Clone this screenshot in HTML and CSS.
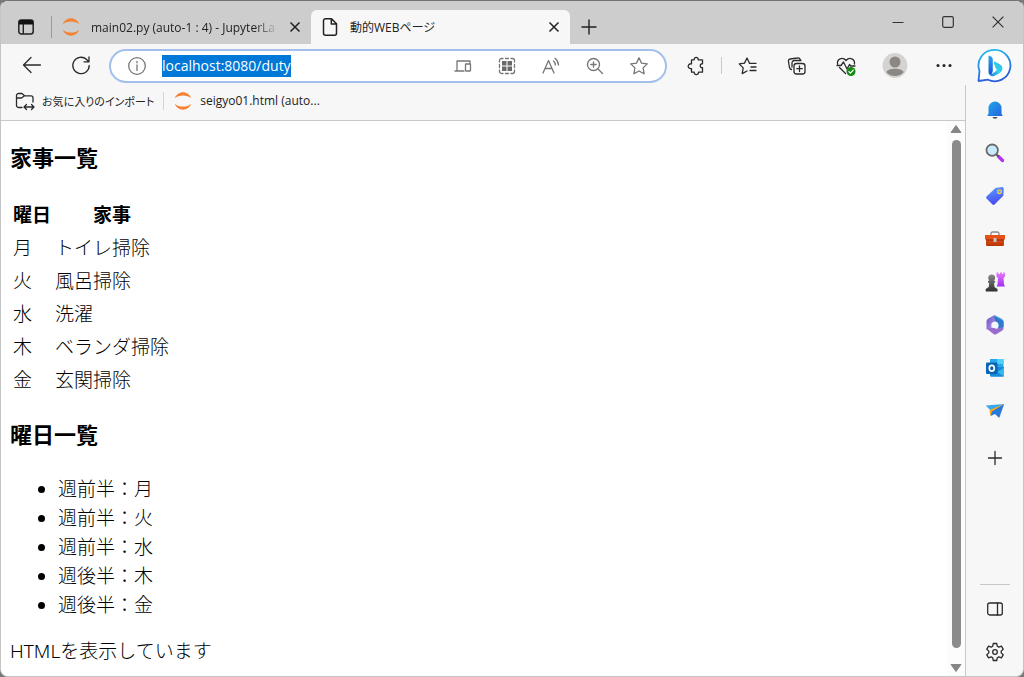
FILE: index.html
```html
<!DOCTYPE html>
<html lang="ja">
<head>
<meta charset="utf-8">
<meta name="viewport" content="width=device-width, initial-scale=1">
<title>動的WEBページ</title>
<link rel="stylesheet" href="styles.css">
</head>
<body>
<svg class="defs" aria-hidden="true">
  <defs>
    <linearGradient id="blue" x1="0" y1="0" x2="1" y2="1"><stop offset="0" stop-color="#1fa7e8"/><stop offset="1" stop-color="#2563e0"/></linearGradient>
    <linearGradient id="ring" x1="0" y1="0" x2="0.3" y2="1"><stop offset="0" stop-color="#25c3ee"/><stop offset="1" stop-color="#2a5bdc"/></linearGradient>
    <linearGradient id="stem" x1="0" y1="0" x2="0" y2="1"><stop offset="0" stop-color="#2aa8f0"/><stop offset="1" stop-color="#1a50d8"/></linearGradient>
    <linearGradient id="bowl" x1="1" y1="0" x2="0" y2="1"><stop offset="0" stop-color="#2db4ee"/><stop offset="0.5" stop-color="#35d3ec"/><stop offset="1" stop-color="#1c6fe8"/></linearGradient>
    <linearGradient id="tag" x1="0" y1="0" x2="0.3" y2="1"><stop offset="0" stop-color="#5aa4fb"/><stop offset="1" stop-color="#4a4af5"/></linearGradient>
    <linearGradient id="box" x1="0" y1="0" x2="0" y2="1"><stop offset="0" stop-color="#f0642a"/><stop offset="1" stop-color="#b93305"/></linearGradient>
    <linearGradient id="rook" x1="0" y1="0" x2="0" y2="1"><stop offset="0" stop-color="#e57bfa"/><stop offset="1" stop-color="#a12df5"/></linearGradient>
    <linearGradient id="pawn" x1="0" y1="0" x2="0" y2="1"><stop offset="0" stop-color="#8a8a8a"/><stop offset="1" stop-color="#303030"/></linearGradient>
    <linearGradient id="violet" x1="0" y1="0" x2="1" y2="1"><stop offset="0" stop-color="#5a4fc4"/><stop offset="1" stop-color="#c79be8"/></linearGradient>
    <symbol id="jupyter" viewBox="0 0 20 20"><path d="M1.800 7.200C3.200 3.500 6.300 1.300 10 1.300s6.800 2.200 8.200 5.900C16.200 5.200 13.200 4.400 10 4.400S3.800 5.200 1.800 7.200zM1.800 12.800C3.200 16.500 6.300 18.700 10 18.700s6.800-2.200 8.200-5.900c-2 2-5 2.800-8.200 2.800s-6.200-.8-8.200-2.800z" fill="#f58233"/></symbol>
    <symbol id="close" viewBox="0 0 12 12"><path d="M1.500 1.500l9 9m0-9l-9 9" fill="none" stroke="#222" stroke-width="1.500"/></symbol>
  </defs>
</svg>
<div class="window">
  <header class="tabstrip">
    <button class="tab-menu" aria-label="タブ操作メニュー"><svg width="18" height="18" viewBox="0 0 18 18"><rect x="1.800" y="2" width="14.400" height="14" rx="2.500" fill="none" stroke="#222" stroke-width="1.500"/><path d="M2 6.500V4.500A2.500 2.500 0 0 1 4.500 2h9A2.500 2.500 0 0 1 16 4.500v2z" fill="#111"/><path d="M6.300 6v10" stroke="#222" stroke-width="1.400"/></svg></button>
    <span class="tab-rule"></span>
    <div class="tab">
      <svg width="20" height="20"><use href="#jupyter"/></svg>
      <span class="tab-title faded">main02.py (auto-1 : 4) - JupyterLa</span>
      <button class="tab-close" aria-label="タブを閉じる"><svg width="12" height="12"><use href="#close"/></svg></button>
    </div>
    <div class="tab active">
      <svg width="20" height="20" viewBox="0 0 20 20"><path d="M5.500 1.800h6l5 5v9.400a2 2 0 0 1-2 2h-9a2 2 0 0 1-2-2V3.800a2 2 0 0 1 2-2zM11.300 2v5h5" fill="none" stroke="#222" stroke-width="1.500" stroke-linejoin="round"/></svg>
      <span class="tab-title">動的WEBページ</span>
      <button class="tab-close" aria-label="タブを閉じる"><svg width="12" height="12"><use href="#close"/></svg></button>
    </div>
    <button class="new-tab" aria-label="新しいタブ"><svg width="16" height="16" viewBox="0 0 16 16"><path d="M8 .5v15M.5 8h15" stroke="#222" stroke-width="1.400"/></svg></button>
    <div class="caption">
      <button aria-label="最小化"><svg width="12" height="12" viewBox="0 0 12 12"><path d="M.5 6.500h11" stroke="#333"/></svg></button>
      <button aria-label="最大化"><svg width="12" height="12" viewBox="0 0 12 12"><rect x=".7" y=".7" width="10.600" height="10.600" rx="1.500" fill="none" stroke="#333" stroke-width="1.200"/></svg></button>
      <button aria-label="閉じる"><svg width="12" height="12" viewBox="0 0 12 12"><path d="M.6.6l10.800 10.800m0-10.800L.6 11.400" stroke="#333" stroke-width="1.200"/></svg></button>
    </div>
  </header>

  <div class="body">
    <div class="main">
      <nav class="toolbar" aria-label="ツール バー">
        <button class="tool" aria-label="戻る"><svg width="20" height="20" viewBox="0 0 20 20" class="line"><path d="M18.500 9H1.800M9 1.500L1.500 9 9 16.500"/></svg></button>
        <button class="tool" aria-label="更新"><svg width="20" height="20" viewBox="0 0 20 20" class="line"><path d="M18.200 9.500A8.200 8.200 0 1 1 15.600 3.500l1.900 2M18 .8v5h-5"/></svg></button>
        <div class="address">
          <button class="mini" aria-label="サイト情報"><svg width="20" height="20" viewBox="0 0 20 20" class="line grey"><circle cx="10" cy="10" r="8.300"/><path d="M10 9v5.500M10 5.300v1.500"/></svg></button>
          <input id="url" class="url" type="text" aria-label="アドレス" value="localhost:8080/duty" spellcheck="false">
          <div class="address-tools">
            <button class="mini" aria-label="デバイス"><svg width="20" height="20" viewBox="0 0 20 20" class="line grey"><path d="M11 15H2M4 15V5h13v2.500"/><rect x="12.500" y="8" width="5" height="7" rx=".5"/></svg></button>
            <button class="mini" aria-label="QR コード"><svg width="20" height="20" viewBox="0 0 20 20" class="line grey"><path d="M2.500 6V4.500a2 2 0 0 1 2-2H6M8.500 2.500h3M14 2.500h1.500a2 2 0 0 1 2 2V6M17.500 8.500v3M17.500 14v1.500a2 2 0 0 1-2 2H14M11.500 17.500h-3M6 17.500H4.500a2 2 0 0 1-2-2V14M2.500 11.500v-3"/><path d="M5 5h4.500v4.500H5zM10.500 5H15v4.500h-4.500zM5 10.500h4.500V15H5zM10.500 10.500H15V15h-4.500z" fill="#6a6a6a" stroke="none"/></svg></button>
            <button class="mini" aria-label="音声で読み上げる"><svg width="20" height="20" viewBox="0 0 20 20" class="line grey"><path d="M2 17L7.500 4.500 13 17M4 12.500h7M12.500 5a5 5 0 0 1 1.800 4M14 2.300a9 9 0 0 1 3.500 6.700"/></svg></button>
            <button class="mini" aria-label="拡大"><svg width="20" height="20" viewBox="0 0 20 20" class="line grey"><circle cx="8.500" cy="8.500" r="6"/><path d="M13 13l4.500 4.500M8.500 5.800v5.400M5.800 8.500h5.400"/></svg></button>
            <button class="mini" aria-label="お気に入りに追加"><svg width="20" height="20" viewBox="0 0 20 20" class="line grey"><path d="M10 1.800l2.500 5.300 5.800.8-4.200 4 1 5.900-5.100-2.800-5.100 2.800 1-5.900-4.200-4 5.800-.8z"/></svg></button>
          </div>
        </div>
        <div class="extensions">
          <button class="tool" aria-label="拡張機能"><svg width="20" height="20" viewBox="0 0 20 20" class="line"><path d="M5.500 3.800h2.700c-.3-3.200 4.300-3.200 4 0h4.300v4c-3-.4-3 4.300 0 3.900v4.500h-4c.3 3.200-4.700 3.200-4.300 0H5.500v-3.500c-4.400.6-4.400-5.500 0-4.900z"/></svg></button>
          <span class="tool-rule"></span>
          <button class="tool" aria-label="お気に入り"><svg width="20" height="20" viewBox="0 0 20 20" class="line"><path d="M11.500 7.200L9 2 6.500 7.100l-5.300.8 4 4-1 5.700L9 15M11.500 7.400H18M13 11h5M12 14.500h6"/></svg></button>
        </div>
        <button class="tool" aria-label="コレクション"><svg width="20" height="20" viewBox="0 0 20 20" class="line"><rect x="7" y="7.500" width="11" height="10.500" rx="2.500"/><path d="M12.500 10v5.500M9.800 12.700h5.500M4.500 13.500c-1.300-.3-1.800-1-2-2L1.500 5.700C1.200 4.200 1.800 3.200 3.200 3L10.500 2c1.500-.3 2.500.3 3 2.500M5 11V7a2.500 2.500 0 0 1 2.500-2.500H14"/></svg></button>
        <button class="tool" aria-label="ブラウザーのエッセンシャル"><svg width="20" height="20" viewBox="0 0 20 20" class="line"><path d="M1.600 8C.6 3 6.500.5 10 4.500 13.500.5 19.400 3 18.400 8M3.500 11.500l6 6M1 9.500h4L7.500 6l3.500 7 2.500-4.500 1.200 1.500H19"/><circle cx="15" cy="15.500" r="4.500" fill="#138a13" stroke="none"/><path d="M12.900 15.600l1.500 1.500 2.800-3" stroke="#fff"/></svg></button>
        <button class="tool" aria-label="プロファイル"><svg width="26" height="26" viewBox="0 0 26 26"><circle cx="13" cy="12.500" r="12.400" fill="#d5d3d0"/><circle cx="13" cy="9" r="5.500" fill="#8a8785"/><path d="M4.500 19.500c0-5 17-5 17 0a12 12 0 0 1-17 0z" fill="#8a8785"/></svg></button>
        <button class="tool" aria-label="設定など"><svg width="20" height="20" viewBox="0 0 20 20"><g fill="#222"><circle cx="4" cy="9.500" r="1.500"/><circle cx="10" cy="9.500" r="1.500"/><circle cx="16" cy="9.500" r="1.500"/></g></svg></button>
      </nav>

      <nav class="favorites" aria-label="お気に入りバー">
        <a href="#" class="favorite"><svg width="20" height="20" viewBox="0 0 20 20" class="line"><path d="M7 16.500H3.500A2 2 0 0 1 1.500 14.500v-10a2 2 0 0 1 2-2H7l2.500 2.300H16a2 2 0 0 1 2 2V11M1.500 7H6.500L9.500 4.800M9.500 16H19M11.500 13.500L9 16l2.500 2.500M16.500 13.500L19 16l-2.500 2.500"/></svg><span class="compact">お気に入りのインポート</span></a>
        <span class="favorite-rule"></span>
        <a href="#" class="favorite"><svg width="20" height="20"><use href="#jupyter"/></svg><span>seigyo01.html (auto...</span></a>
      </nav>

      <div class="viewport">
        <main class="page">
          <h3>家事一覧</h3>
          <table>
            <thead><tr><th>曜日</th><th>家事</th></tr></thead>
            <tbody>
              <tr><td>月</td><td>トイレ掃除</td></tr>
              <tr><td>火</td><td>風呂掃除</td></tr>
              <tr><td>水</td><td>洗濯</td></tr>
              <tr><td>木</td><td>ベランダ掃除</td></tr>
              <tr><td>金</td><td>玄関掃除</td></tr>
            </tbody>
          </table>
          <h3>曜日一覧</h3>
          <ul>
            <li>週前半：月</li>
            <li>週前半：火</li>
            <li>週前半：水</li>
            <li>週後半：木</li>
            <li>週後半：金</li>
          </ul>
          <p>HTMLを表示しています</p>
        </main>
        <div class="scrollbar">
          <svg width="12" height="8" viewBox="0 0 12 8"><path d="M6 .5L11 7.500H1z" fill="#868686" stroke="#868686" stroke-linejoin="round"/></svg>
          <span class="thumb"></span>
          <svg width="12" height="8" viewBox="0 0 12 8"><path d="M6 7.500L1 .5h10z" fill="#868686" stroke="#868686" stroke-linejoin="round"/></svg>
        </div>
      </div>
    </div>

    <aside class="sidebar">
      <button class="bing" aria-label="検出"><svg width="36" height="36" viewBox="0 0 36 36"><path d="M18.500 1.800A15.700 15.700 0 1 1 12 31.700L2.500 33 3.500 23A15.700 15.700 0 0 1 18.500 1.800z" fill="#fff" stroke="url(#ring)" stroke-width="1.800" stroke-linejoin="round"/><path d="M13 7.500q3.800 1 3.800 4v11.500L15.500 27Q12.500 26.500 12.500 24V8q0-.5.5-.5z" fill="url(#stem)"/><path d="M18.500 13.500l5 2.600q3 1.600 3 4.500 0 3-3 4.700l-5 2.500q-3.500 1.500-5.500-1.500 2.500.5 6-2.500l2-2q-1.200-.8-1.700-2.300l-1.500-4.500q-.3-1.500.7-1.500z" fill="url(#bowl)"/></svg></button>
      <div class="apps">
        <button aria-label="通知"><svg width="20" height="20" viewBox="0 0 20 20"><path d="M3.500 13.500V8a6.500 6.500 0 0 1 13 0v5.500L17.700 16H2.300z" fill="url(#blue)"/><path d="M7.500 17h5a2.500 1.800 0 0 1-5 0z" fill="#555"/></svg></button>
        <button aria-label="検索"><svg width="20" height="20" viewBox="0 0 20 20"><path d="M13.500 13.500l4 4" stroke="#b42df5" stroke-width="3.200" stroke-linecap="round"/><path d="M11 11l2.500 2.500" stroke="#555" stroke-width="2"/><circle cx="7.200" cy="7.200" r="5.700" fill="#c9eafc" stroke="#6b6b6b" stroke-width="1.800"/></svg></button>
        <button aria-label="ショッピング"><svg width="20" height="20" viewBox="0 0 20 20"><path d="M10.500 2L17 1q1.800 0 1.800 1.800l-.5 7L9.500 18.500q-1 .8-2 0L1.500 12.500q-.8-1 0-2z" fill="url(#tag)"/><circle cx="14.500" cy="5.800" r="1.900" fill="#7798ef" stroke="#f2cf45" stroke-width="1.200"/></svg></button>
        <button aria-label="ツール"><svg width="20" height="20" viewBox="0 0 20 20"><path d="M6 6V4.500a1.500 1.500 0 0 1 1.500-1.500h5A1.500 1.500 0 0 1 14 4.500V6" fill="none" stroke="#888" stroke-width="1.300"/><rect x="1" y="6" width="18" height="11" rx="1.200" fill="url(#box)"/><path d="M0 6h20v4.500H0z" fill="#e65118"/><path d="M1 11h18" stroke="#8f2b08"/><rect x="8.500" y="9" width="3" height="4" fill="#c3c3c3"/></svg></button>
        <button aria-label="ゲーム"><svg width="20" height="20" viewBox="0 0 20 20"><path d="M11.500.5h2V2h1.500V.5h2V2h1.300V.5H20v4L18.500 6l.5 6.500 1 2h-8.500l1-2L13 6l-1.500-1.500z" fill="url(#rook)"/><path d="M3.200 6a3.500 3.500 0 1 1 7 0q0 1.800-1.500 2.800h1.500v2H9l.5 4.200 3 2v2.500H.7V17l3-2 .5-4.200H3v-2h1.500Q3.200 7.800 3.200 6z" fill="url(#pawn)"/></svg></button>
        <button aria-label="Microsoft 365"><svg width="20" height="20" viewBox="0 0 20 20"><path d="M9.500 0L17 4q1.500 1 1.500 2.500v5L13 9.500 10 6 7 7.500z" fill="#3ea3dc"/><path d="M9.500 0L3 3.800Q1.500 4.800 1.500 6.500v8L6.500 13V8.500L10 6.500z" fill="url(#violet)"/><path d="M1.500 13.500L8.500 19q1.500 1 3 0l5.500-3.300q1.500-1 1.500-2.500v-2L12 14l-3.500-1.500z" fill="#9a6bce"/><path d="M18.500 6v6L12 14l1.500-2V8L10 6l-1-5z" fill="#3278cd"/><circle cx="10" cy="10" r="3.300" fill="#f7f7f7"/></svg></button>
        <button aria-label="Outlook"><svg width="20" height="20" viewBox="0 0 20 20"><path d="M5 1h13.500v9H5z" fill="#28a8ea"/><path d="M12 1h6.500v5H12z" fill="#50d1f7"/><path d="M5 9h14v8.500q0 1.300-1.300 1.300H6.300Q5 18.800 5 17.500z" fill="#168bd8"/><path d="M19 10v8.500L12 14z" fill="#35b8f1"/><rect x="1" y="4.500" width="11.500" height="11.500" rx="1.200" fill="#0864b5"/><ellipse cx="6.800" cy="10.300" rx="2.500" ry="2.900" fill="none" stroke="#fff" stroke-width="1.700"/></svg></button>
        <button aria-label="Drop"><svg width="20" height="20" viewBox="0 0 20 20"><path d="M.8 4.500L19.200 3 6 10z" fill="#37a9ee"/><path d="M4.500 9L19.200 3 5.500 15z" fill="#f8a719"/><path d="M5.500 15L7 10.500 19.200 3l-5 14-4.200-4z" fill="#2979dc"/></svg></button>
        <button aria-label="カスタマイズ"><svg width="20" height="20" viewBox="0 0 20 20" class="line"><path d="M10 3.500v13M3.500 10h13"/></svg></button>
      </div>
      <div class="side-settings">
        <button aria-label="サイドバーの表示"><svg width="20" height="20" viewBox="0 0 20 20" class="line"><rect x="2.700" y="4" width="14.600" height="12" rx="2"/><path d="M12.500 4v12"/></svg></button>
        <button aria-label="設定"><svg width="20" height="20" viewBox="0 0 20 20" class="line"><path d="M8.300 1.500h3.400l.6 2.700 1.500.9 2.600-.9 1.800 3-2 1.900v1.800l2 1.900-1.800 3-2.600-.9-1.500.9-.6 2.700H8.300l-.6-2.700-1.500-.9-2.600.9-1.800-3 2-1.900V9.100l-2-1.900 1.800-3 2.600.9 1.500-.9z"/><circle cx="10" cy="10" r="2.300"/></svg></button>
      </div>
    </aside>
  </div>
</div>
<script>
  const url = document.getElementById("url");
  url.focus();
  url.select();
</script>
</body>
</html>
```
FILE: styles.css
```css
* { box-sizing: border-box; }

body {
  margin: 0;
  background: #77797b;
  color: #222;
  font-family: "Open Sans", "Noto Sans CJK JP", sans-serif;
  font-size: 12px;
}

button {
  display: flex;
  align-items: center;
  justify-content: center;
  padding: 0;
  border: 0;
  background: none;
}

svg { display: block; flex: none; }
.defs { position: absolute; width: 0; height: 0; }

.line {
  fill: none;
  stroke: #2b2b2b;
  stroke-width: 1.3;
  stroke-linecap: round;
  stroke-linejoin: round;
}
.line.grey { stroke: #767676; }

.window {
  display: flex;
  flex-direction: column;
  min-height: 100vh;
  overflow: hidden;
  border: 1px solid #c4c4c4;
  border-top-color: #747274;
  border-radius: 8px;
  background: #f7f7f7;
}

/* Tab strip */
.tabstrip {
  display: flex;
  align-items: stretch;
  height: 43px;
  padding-top: 9px;
  background: #cdcdcd;
}
.tab-menu { width: 50px; }
.tab-rule { width: 1px; height: 22px; margin-top: 6px; background: #999; }
.tab {
  display: flex;
  flex: 0 1 259px;
  align-items: center;
  gap: 10px;
  min-width: 0;
  padding: 0 9px;
}
.tab.active { border-radius: 6px 6px 0 0; background: #f7f7f7; }
.tab-title {
  flex: 1;
  min-width: 0;
  overflow: hidden;
  white-space: nowrap;
  font-feature-settings: "palt";
}
.faded {
  -webkit-mask-image: linear-gradient(to right, #000 88%, transparent);
  mask-image: linear-gradient(to right, #000 88%, transparent);
}
.tab-close { width: 14px; height: 20px; }
.new-tab { width: 38px; }
.caption { display: flex; height: 24px; margin-left: auto; }
.caption button { width: 50px; }

/* Area below the tab strip */
.body { display: flex; flex: 1; }
.main { display: flex; flex: 1; flex-direction: column; min-width: 0; }

.toolbar { display: flex; align-items: center; gap: 8px; height: 43px; padding: 0 1px 0 10px; }
.tool { flex: none; width: 41px; height: 34px; }
.address {
  display: flex;
  flex: 1;
  align-items: center;
  min-width: 0;
  height: 34px;
  padding: 0 14px;
  border: 2px solid #a3c0ec;
  border-radius: 17px;
  background: #fff;
}
.mini { flex: none; width: 24px; height: 24px; }
.url {
  flex: 1;
  min-width: 0;
  margin-left: 13px;
  padding: 0;
  border: 0;
  outline: 0;
  background: none;
  color: #222;
  caret-color: transparent;
  font-family: inherit;
  font-size: 14px;
  line-height: 22px;
}
.url::selection { background: #0078d7; color: #fff; }
.address-tools { display: flex; gap: 20px; }
.extensions { display: flex; align-items: center; gap: 5px; }
.tool-rule { width: 1px; height: 17px; background: #c9c9c9; }

.favorites {
  display: flex;
  align-items: center;
  gap: 9px;
  height: 34px;
  padding: 0 14px 6px;
  border-bottom: 1px solid #c8c8c8;
}
.favorite {
  display: flex;
  align-items: center;
  gap: 7px;
  color: inherit;
  font-feature-settings: "palt";
  text-decoration: none;
}
.compact { font-size: 11px; }
.favorite-rule { width: 1px; height: 18px; background: #d5d5d5; }

/* Web page */
.viewport { display: flex; flex: 1; background: #fff; }
.page {
  flex: 1;
  padding: 0 9px;
  color: #000;
  font-family: "Noto Sans", "Noto Sans CJK JP", sans-serif;
  font-size: 19px;
  line-height: 29px;
}
.page h3 { margin: 20px 0 25px; font-size: 22px; line-height: 32px; }
.page table { border-spacing: 2px; line-height: 29px; }
.page th, .page td { padding: 1px; }
.page td { font-weight: 300; }
.page ul, .page p { font-weight: 300; }
.page td:first-child { padding-right: 3px; }
.page ul { margin: 0; padding-left: 48px; }
.page p { margin: 17px 0 8px; }

.scrollbar {
  display: flex;
  flex-direction: column;
  align-items: center;
  gap: 7px;
  width: 18px;
  padding: 4px 0;
  background: #fcfcfc;
}
.thumb { flex: 1; width: 9px; margin-bottom: 9px; border-radius: 5px; background: #8b8b8b; }

/* Sidebar */
.sidebar { display: flex; flex: none; flex-direction: column; width: 58px; }
.bing { height: 41px; padding-top: 2px; }
.apps {
  display: flex;
  flex: 1;
  flex-direction: column;
  align-items: center;
  gap: 15px;
  padding-top: 11px;
  border-left: 1px solid #c8c8c8;
}
.apps button, .side-settings button { width: 40px; height: 28px; }
.apps button:last-child { margin-top: 4px; }
.side-settings {
  display: flex;
  flex-direction: column;
  align-items: center;
  gap: 15px;
  padding-bottom: 10px;
  border-left: 1px solid #c8c8c8;
}
.side-settings::before { content: ""; width: 30px; height: 1px; margin-bottom: -5px; background: #c8c8c8; }
```
